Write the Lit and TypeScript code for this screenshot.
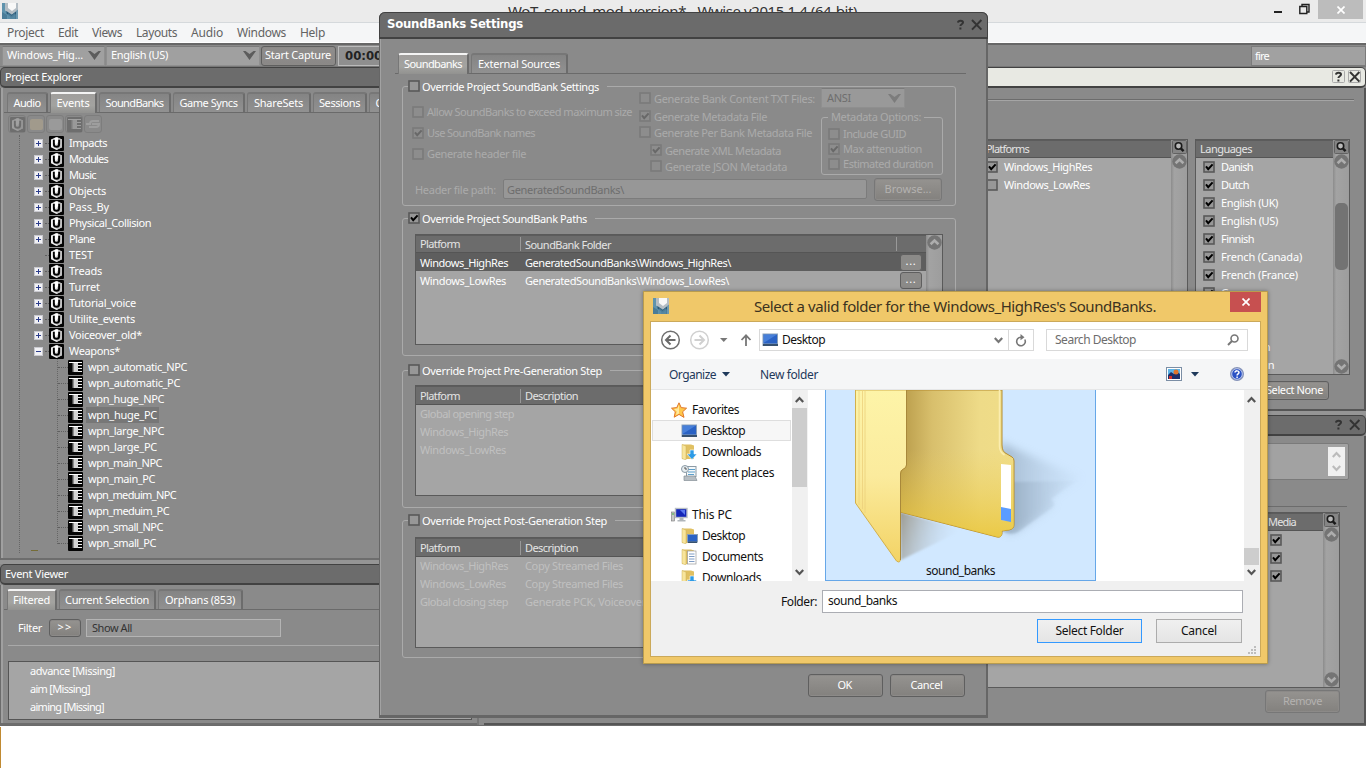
import { LitElement, html, css, svg, nothing } from "lit";
import { customElement } from "lit/decorators.js";

const TAHOMA = '11px "Noto Sans"';
const TAHOMA_BOLD = 'bold 13px "DejaVu Sans Condensed"';
const SEGOE = '12px "Noto Sans"';
const SEGOE_L = '15px "Noto Sans"';
const pen = document.createElement("canvas").getContext("2d")!;

/** Letter spacing that makes a text as wide as its slot. */
const track = (text: string, width: number, font: string) => {
  pen.font = font;
  return ((width - pen.measureText(text).width) / text.length).toFixed(3);
};
const tx = (text: string, width = 0, font = TAHOMA, cls = "") =>
  html`<span class="tx ${cls}" style=${width ? `letter-spacing:${track(text, width, font)}px` : nothing}>${text}</span>`;
const sg = (text: string, width = 0) => tx(text, width, SEGOE);

const logo = html`<svg class="logo" width="16" height="16" viewBox="0 0 16 16">
  <rect width="16" height="16" fill="#4a7c98" /><path d="M0 0h4v8l4 3v5H5V12L0 9z" fill="#5f93ad" /><path d="M3 0H16V7L10 11.500 3 7.500z" fill="#b4bdc4" />
  <path d="M6 0h8v5l-4 3-4-3z" fill="#f8f8f8" /><path d="M4.500 8l5 4.200L14.500 8v2.500l-5 4-5-4z" fill="#2c5a78" /><path d="M6 10l3.500 2.800L13 10v6H6z" fill="#5a8ca6" opacity=".7" /><path d="M14 8l2-1.500v9.500h-2z" fill="#6c98b0" /></svg>`;
const eventU = html`<svg width="15" height="15" viewBox="0 0 15 15"><rect width="15" height="15" rx="1" fill="#050505" />
  <path d="M7.500 1L13 3.600v7.600L7.500 14 2 11.200v-7.600z" fill="#efefef" /><path d="M7.500 1L13 3.600v7.600L7.500 14z" fill="#c2c2c2" />
  <path d="M4.900 3.700v4.500a2.600 2.600 0 0 0 5.200 0V3.700" fill="none" stroke="#000" stroke-width="2" /><path d="M5.900 1.800h3.200v4.200L7.500 8.500 5.900 7z" fill="#fff" /></svg>`;
const action = html`<svg width="15" height="15" viewBox="0 0 15 15"><rect width="15" height="15" rx="1" fill="#050505" />
  <path d="M1 2.500h13" stroke="#fff" /><path d="M10 5.500h4M10 8.500h4M10 11.500h4" stroke="#eee" /><path d="M4.500 3h5.500v9H4.500z" fill="#8c8c8c" /><path d="M6 3H10V12H6z" fill="#d4d4d4" /></svg>`;
const lens = html`<svg class="lens" width="15" height="14" viewBox="0 0 15 14"><rect x=".5" y=".5" width="14" height="13" rx="1" fill="#858585" stroke="#626262" />
  <circle cx="6.500" cy="6" r="3.200" fill="#b9b9b9" stroke="#1a1a1a" stroke-width="1.600" /><path d="M9 8.600l2.600 2.600" stroke="#1a1a1a" stroke-width="2.400" /></svg>`;
const knob = (down = false) => html`<svg class="knob" width="15" height="15" viewBox="0 0 15 15"><circle cx="7.500" cy="7.500" r="7.200" fill="#747474" />
  <path d=${down ? "M3.600 5.800L7.500 9.400l3.900-3.600" : "M3.600 9.200L7.500 5.600l3.900 3.600"} fill="none" stroke="#adadad" stroke-width="2.600" /></svg>`;
const chk = (on: boolean, off = false) => html`<svg class="chk ${off ? "off" : ""}" width="12" height="12" viewBox="0 0 12 12">
  <rect x="1" y="1" width="10" height="10" fill=${off ? "#8d8d8d" : "#979797"} stroke=${off ? "#7a7a7a" : "#595959"} stroke-width="1.600" />
  ${on ? svg`<path d="M3 5.400L5.200 8.200 9.600 3.400" fill="none" stroke=${off ? "#686868" : "#000"} stroke-width="2" />` : nothing}</svg>`;
const tri = (c = "#5c5c5c") => html`<svg width="13" height="9" viewBox="0 0 13 9"><path d="M0 0h2.500l4 3 4-3H13L6.500 9z" fill=${c} /></svg>`;
const helpX = (box = "none") => html`<svg class="hx" width="30" height="14" viewBox="0 0 30 14"><g fill="none" stroke=${box}><rect x=".5" y=".5" width="12" height="12" rx="1" /><rect x="16.500" y=".5" width="12" height="12" rx="1" /></g>
  <path d="M4 4.600c.2-2.400 5-2.300 5 0 0 1.800-2.600 1.500-2.600 3.400M6.400 9.400v2" fill="none" stroke="#333" stroke-width="2" /><path d="M18 2l9.400 9.600M27.400 2L18 11.600" stroke="#333" stroke-width="2" /></svg>`;
const caret = (up: boolean, c = "#555") => html`<svg width="9" height="7" viewBox="0 0 9 7"><path d=${up ? "M.8 6L4.500 2 8.200 6" : "M.8 1L4.500 5 8.200 1"} fill="none" stroke=${c} stroke-width="2.200" /></svg>`;
const desk = html`<svg width="17" height="16" viewBox="0 0 17 16"><rect x=".5" y="1.500" width="15.500" height="12.500" fill="#8aa0b8" /><rect x="1.500" y="2.500" width="13.500" height="9" fill="#2a62c4" /><path d="M1.500 2.500H15L1.500 11z" fill="#5b93e8" opacity=".6" /><path d="M1 12h15v2H1z" fill="#37516f" /></svg>`;
const fold = (extra: unknown) => html`<svg width="17" height="16" viewBox="0 0 17 16"><path d="M1 .5h9l3 1V15H1z" fill="#e0c062" /><path d="M1 .5l4 1.600V16l-4-1.400z" fill="#f8e59c" stroke="#cdb05a" stroke-width=".5" />${extra}</svg>`;
const down = fold(svg`<path d="M9 6h4v4h3l-5 5.600L6 10h3z" fill="#2d9be6" stroke="#fff" stroke-width=".6" />`);
const folDesk = fold(svg`<rect x="6.500" y="6.500" width="10" height="7.500" fill="#2a62c4" stroke="#8aa0b8" /><path d="M7 13.500h9v1.500H7z" fill="#37516f" />`);
const docs = fold(svg`<rect x="6.500" y="2" width="8.500" height="13" fill="#fff" stroke="#999" stroke-width=".7" /><path d="M8 5h5.500M8 7.500h5.500M8 10h5.500M8 12.500h5.500" stroke="#7f9cc4" />`);
const recent = html`<svg width="17" height="16" viewBox="0 0 17 16"><rect x="5.500" y="1.500" width="9.500" height="10" fill="#f4f8fa" stroke="#8b9aa5" /><path d="M7 4.500h7M7 7h7M7 9.500h6" stroke="#5a9fcc" /><path d="M3 11h11l2 4.500H3z" fill="#b7bec3" stroke="#858f96" stroke-width=".7" /><circle cx="4" cy="4" r="3.500" fill="#e6edf0" stroke="#8b9aa5" /><path d="M4 2v2h2" fill="none" stroke="#555" /></svg>`;
const star = html`<svg width="17" height="16" viewBox="0 0 17 16"><path d="M8 .8l2.200 4.800 5.400.6-4 3.600 1.400 5.600L8 12.400 3.200 15.200l1.100-5.400L.5 6.200l5.300-.6z" fill="#ffc84a" stroke="#e0762a" /><path d="M8 2.500v9L5 13l.8-3.600L3 7l3.600-.6z" fill="#ffe9a0" /></svg>`;
const pc = html`<svg width="17" height="16" viewBox="0 0 17 16"><rect x=".5" y="5" width="3" height="9" fill="#c8c8c8" stroke="#777" stroke-width=".6" /><path d="M1 7h2" stroke="#3cb43c" /><rect x="4.500" y="1.500" width="11.500" height="9" fill="#1527b8" stroke="#b9bfc6" stroke-width="1.400" /><path d="M9 3h5v5z" fill="#5a78f0" /><path d="M8.500 11h4v2h2v1.500h-8V13h2z" fill="#b0b6bb" /></svg>`;

const FOLDERS: [string, number][] = [["Impacts", 38], ["Modules", 39], ["Music", 27], ["Objects", 37], ["Pass_By", 40], ["Physical_Collision", 82], ["Plane", 26], ["TEST", 24], ["Treads", 33], ["Turret", 31], ["Tutorial_voice", 67], ["Utilite_events", 66], ["Voiceover_old*", 73], ["Weapons*", 51]];
const EVENTS: [string, number][] = [["wpn_automatic_NPC", 99], ["wpn_automatic_PC", 92], ["wpn_huge_NPC", 76], ["wpn_huge_PC", 69], ["wpn_large_NPC", 76], ["wpn_large_PC", 69], ["wpn_main_NPC", 74], ["wpn_main_PC", 67], ["wpn_meduim_NPC", 88], ["wpn_meduim_PC", 81], ["wpn_small_NPC", 75], ["wpn_small_PC", 68]];
const LANGS: [string, number][] = [["Danish", 32], ["Dutch", 28], ["English (UK)", 57], ["English (US)", 57], ["Finnish", 33], ["French (Canada)", 81], ["French (France)", 77], ["German", 38], ["Greek", 29], ["Hebrew", 37], ["Hungarian", 49], ["Indonesian", 53]];

@customElement("app-root")
export class AppRoot extends LitElement {
  static styles = css`
    :host { display: block; position: relative; width: 1366px; height: 768px; overflow: hidden; background: #fff; font: 11px "Noto Sans", sans-serif; color: #fff; }
    * { box-sizing: border-box; }
    svg { display: block; flex: none; }
    .tx { white-space: pre; display: inline-block; }
    .row, .tabs, .tab, .btn, .field, .head { display: flex; align-items: center; flex: none; }
    .col { display: flex; flex-direction: column; }
    .grow { flex: 1; min-width: 0; }
    .tab .tx, .head .tx, .node .tx, .plat .tx, .lang .tx, .combo .tx, .btn .tx, .g3 .tr .tx, .g4 .tr .tx { margin-bottom: 2px; }
    .app { height: 726px; background: #8a8a8a; border-bottom: 1px solid #6c6c6c; }
    .caption { height: 23px; flex: none; background: #ebebeb; border-bottom: 1px solid #d5d9dc; display: flex; padding-left: 2px; color: #333; }
    .caption .logo { margin-top: 3px; }
    .caption .name { width: 1180px; padding-left: 490px; font: 15px/22px "Noto Sans"; }
    .wmin { width: 8px; height: 2px; background: #222; margin: 11px 17px 0 auto; }
    .wclose { width: 45px; height: 19px; background: #bcbcbc; margin: 0 3px 0 8px; display: flex; align-items: center; justify-content: center; }
    .menu { height: 20px; flex: none; background: #f5f6f7; color: #636363; font: 12px/20px "Noto Sans"; border-bottom: 1px solid #fff; display: grid; grid-template-columns: 51px 34px 44px 55px 46px 63px 40px; padding-left: 7px; }
    .tools { height: 24px; border-top: 2px solid #676767; padding-left: 2px; gap: 1px; border-bottom: 1px solid #777; flex: none; }
    .combo { height: 20px; background: #a0a0a0; border: 1px solid #8f8f8f; border-top-color: #7b7b7b; display: flex; align-items: center; justify-content: space-between; padding: 0 3px 0 5px; }
    .combo.a { width: 103px; padding-left: 4px; } .combo.b { width: 154px; padding-left: 4px; }
    .btn { justify-content: center; border: 1px solid #5f5f5f; border-radius: 3px; background: linear-gradient(#959390, #83817e); box-shadow: inset 0 0 0 1px #8c8a88; }
    .btn.dis { color: #b4b2b0; border-color: #777; }
    .cap { width: 75px; height: 20px; background: linear-gradient(#8f8d8c, #8a8887); padding: 0 1px 1px 0; }
    .clock { border: 1px solid #bbb; background: #8f8f8f; color: #222; height: 20px; width: 200px; font: bold 13px/17px "DejaVu Sans Condensed"; padding-left: 6px; margin-left: 1px; }
    .find { margin-left: auto; width: 115px; height: 20px; background: #a1a1a1; border: 1px solid #7b7b7b; padding-left: 3px; line-height: 17px; }
    .cols { display: flex; flex: 1; min-height: 0; }
    .left { width: 479px; flex: none; border-right: 2px solid #777; }
    .right { flex: 1; margin-left: 5px; }
    .head { height: 21px; border: 1px solid #424242; border-bottom-width: 2px; border-radius: 5px; background: #6c6c6c; padding: 0 3px 0 4px; justify-content: space-between; }
    .head.hot { background: #e8e9e3; }
    .body { border-left: 1px solid #6b6b6b; box-shadow: inset 2px 0 #a0a0a0; border-bottom: 2px solid #6d6d6d; }
    .rbody { border-right: 2px solid #555; border-bottom: 2px solid #555; }
    .explorer { height: 472px; } .gap { height: 4px; background: #959595; flex: none; }
    .tabs { align-items: flex-end; border-bottom: 1px solid #6a6a6a; gap: 2px; height: 25px; margin: 0 0 0 3px; padding-left: 3px; }
    .tab { justify-content: center; height: 20px; border: 1px solid #777; border-width: 2px 2px 0 1px; border-right-color: #6c6c6c; border-radius: 3px 3px 0 0; background: linear-gradient(#848484, #919191); }
    .tab.on { height: 21px; margin-bottom: -1px; border-top: 2px solid #f4f4f4; background: linear-gradient(#a09e9c, #a3a3a0 60%, #929290); }
    .icons { display: flex; gap: 1px; padding: 2px 0 0 7px; height: 22px; flex: none; }
    .ib { width: 18px; height: 18px; border: 1px solid #7d7d7d; border-radius: 3px; display: grid; place-items: center; }
    .ib svg { opacity: .2; }
    .ib i { width: 13px; height: 11px; border-radius: 2px; background: #a19a8c; } .ib i.g { background: #9a9a9a; }
    .tree { height: 418px; overflow: hidden; margin-left: 18px; border-left: 1px dotted #666; }
    .node { height: 16px; display: flex; align-items: center; margin-left: 14px; }
    .pm { width: 9px; height: 9px; background: #f1f1f4; border: 1px solid #c9c9cf; display: grid; place-items: center; margin-right: 2px; flex: none; }
    .pm.leaf { visibility: hidden; }
    .dots { width: 4px; border-top: 1px dotted #5f5f5f; }
    .node .tx { margin-left: 5px; }
    .kids { margin-left: 37px; border-left: 1px dotted #666; height: 185px; }
    .kid { height: 16px; display: flex; align-items: center; }
    .kid .dots { width: 10px; }
    .kid .nm { margin-left: 3px; padding: 0 2px; height: 16px; line-height: 16px; } .kid .nm.on { background: #777; }
    .stub { width: 7px; height: 1px; background: #756c36; margin: 6px 0 0 11px; }
    .filter { height: 36px; margin: 0 0 0 7px; padding-left: 10px; border-bottom: 1px solid #a9a9a9; }
    .filter .btn { width: 32px; height: 18px; margin: 0 5px 0 7px; }
    .fbox { width: 195px; height: 18px; border: 1px solid #b4b4b4; background: #969696; color: #333; padding-left: 5px; line-height: 15px; }
    .list { border: 1px solid #555; background: #a5a5a5; margin: 15px 5px 0 7px; height: 59px; }
    .list div { height: 18px; padding-left: 21px; line-height: 17px; }
    .t { border: 1px solid #5a5a5a; background: #a5a5a5; display: flex; flex: none; overflow: hidden; }
    .th { height: 18px; background: #6c6c6c; border-bottom: 1px solid #555; border-top: 1px solid #5c5c5c; display: flex; align-items: center; color: #e4e4e4; }
    .tr { height: 18px; display: flex; align-items: center; }
    .lang .tr { padding-left: 7px; gap: 6px; }
    .sb { width: 16px; background: linear-gradient(90deg, #8c8c8c, #a3a3a3 20%, #9d9d9d); display: flex; flex-direction: column; align-items: center; flex: none; }
    .thumb { width: 13px; height: 67px; border-radius: 5px; background: #737373; margin-top: 34px; }
    .sb .end { margin-top: auto; }
    .rtop { height: 323px; } .rt { padding: 11px 10px 0 0; height: 51px; flex: none; }
    .rule { height: 2px; border-top: 1px solid #6c6c6c; border-bottom: 1px solid #a5a5a5; }
    .tables { display: flex; justify-content: flex-end; gap: 7px; padding-right: 14px; flex: none; }
    .plat { width: 205px; } .plat .th { padding-left: 2px; } .plat .tr { padding-left: 2px; gap: 6px; }
    .lang { width: 155px; } .lang .th { padding-left: 4px; }
    .plat, .lang { height: 236px; }
    .none { width: 75px; height: 19px; align-self: flex-end; margin: 6px 35px 0 0; padding-left: 6px; }
    .memo { align-self: flex-end; width: 480px; height: 37px; background: #a2a2a2; border: 1px solid #7a7a7a; border-radius: 2px; margin: 7px 15px 0 0; padding: 3px 3px; display: flex; justify-content: flex-end; flex: none; }
    .spin { width: 17px; height: 29px; background: #f0f0f0; display: flex; flex-direction: column; justify-content: space-around; align-items: center; }
    .rule2 { height: 1px; background: #6c6c6c; margin: 26px 17px 5px 0; flex: none; }
    .media { height: 176px; width: 700px; align-self: flex-end; margin-right: 24px; }
    .media .col.grow { align-items: stretch; } .media .th { justify-content: flex-end; padding-right: 27px; }
    .media .tx { margin-bottom: 2px; }
    .media .tr { justify-content: flex-end; padding-right: 41px; }
    .remove { align-self: flex-end; width: 75px; height: 23px; margin: 2px 24px 0 0; }
    .edge { position: absolute; left: 0; top: 727px; width: 1px; height: 41px; background: #c08a32; }

    .dlg { position: absolute; left: 379px; top: 12px; width: 609px; height: 706px; background: #8a8a8a; border: 1px solid #666; border-width: 0 2px 3px 1px; border-radius: 6px 6px 0 0; box-shadow: inset 1px 0 #a2a2a2; display: flex; flex-direction: column; }
    .dt { height: 27px; margin: 0 -2px 0 -1px; border: 1px solid #424242; border-bottom-width: 2px; background: #6b6b6b; border-radius: 6px 6px 0 0; display: flex; justify-content: space-between; align-items: center; padding: 0 3px 2px 7px; font: bold 13px/22px "DejaVu Sans Condensed"; flex: none; }
    .dt .hx { margin-top: 2px; }
    .dlg > .tabs { height: 35px; margin: 0 20px 0 15px; padding-left: 3px; }
    .grp { border: 1px solid #aaa; border-radius: 3px; width: 554px; margin-left: 22px; height: 138px; flex: none; }
    .lg { height: 12px; width: fit-content; margin: -7px 0 0 5px; display: flex; align-items: center; gap: 2px; background: #8a8a8a; padding-right: 8px; }
    .lg .tx { margin-top: 1px; }
    .g1 { margin-top: 12px; height: 120px; } .g2 { margin-top: 12px; } .g3 { margin-top: 14px; } .g4 { margin-top: 12px; }
    .g1 { color: #ababab; } .g1 > .lg { color: #fff; }
    .opts { display: flex; height: 85px; padding-left: 9px; }
    .c1 { width: 227px; padding-top: 9px; } .c1 .o { height: 21px; }
    .c2 { width: 182px; margin-top: -2px; } .c2 .o { height: 16px; }
    .o { display: flex; align-items: center; gap: 3px; flex: none; } .m3 { margin-top: 2px; } .in { padding-left: 11px; } .m2 { margin-top: 2px; }
    .c3 { width: 122px; margin-top: -4px; }
    .c3 .combo { width: 84px; color: #6e6e6e; background: #999; }
    .meta { border: 1px solid #aaa; border-radius: 3px; height: 58px; margin-top: 9px; padding-left: 6px; }
    .meta .lg2 { height: 12px; line-height: 12px; margin: -7px 0 0 0; padding: 0 3px; background: #8a8a8a; width: fit-content; }
    .meta .o { height: 15px; } .meta .o.f { margin-top: 3px; }
    .path { height: 24px; padding-left: 12px; }
    .path .pi { margin-left: 7px; width: 364px; height: 20px; background: #979797; border: 1px solid #7c7c7c; color: #6e6e6e; padding-left: 3px; line-height: 19px; border-radius: 2px; }
    .path .btn { width: 68px; height: 23px; margin-left: 7px; }
    .grp .t { width: 528px; height: 111px; margin: 10px 0 0 12px; }
    .g3 .t { margin-top: 9px; } .g4 .t { margin-top: 11px; }
    .grp .th { height: 19px; } .g2 .th { height: 18px; }
    .th .a, .tr .a { width: 105px; padding-left: 4px; flex: none; } .th .a { border-right: 1px solid #999; height: 14px; line-height: 14px; }
    .th .b, .tr .b { padding-left: 4px; flex: 1; } .th .z { width: 30px; border-left: 1px solid #999; height: 14px; }
    .tr.sel { background: #5e5e5e; } .tr .btn { width: 22px; height: 17px; margin-right: 4px; background: #8b8a88; line-height: 12px; }
    .dim { color: #c0c0c0; }
    .okrow { display: flex; gap: 7px; justify-content: flex-end; margin: 16px 21px 0 0; } .okrow .btn { width: 75px; height: 23px; padding-right: 2px; }

    .fd { position: absolute; left: 643px; top: 291px; width: 625px; height: 373px; background: #f0c869; border: 1px solid #b99c4e; padding: 0 6px; box-shadow: 0 0 4px rgba(0, 0, 0, .35); display: flex; flex-direction: column; font: 12px "Noto Sans", sans-serif; color: #111; }
    .ft { height: 29px; display: flex; padding-left: 3px; flex: none; } .ft .logo { margin-top: 6px; } .ft .name { font: 15px/28px "Noto Sans"; padding-left: 85px; width: 561px; color: #3b3220; }
    .fx { width: 31px; height: 20px; background: #c75050; display: grid; place-items: center; }
    .fb { height: 336px; border: 1px solid #cba95a; background: #f0f0f0; display: flex; flex-direction: column; overflow: hidden; flex: none; }
    .nav { height: 37px; background: #fff; padding: 0 0 1px 9px; display: flex; align-items: center; flex: none; }
    .addr { width: 275px; height: 22px; border: 1px solid #d9d9d9; display: flex; align-items: center; padding-left: 2px; margin-left: 7px; }
    .addr .tx, .srch .tx { margin-bottom: 1px; }
    .addr .tx { margin-left: 3px; } .addr .dd { margin-left: auto; padding-right: 5px; } .addr .rf { border-left: 1px solid #d9d9d9; height: 20px; width: 25px; display: grid; place-items: center; }
    .srch { width: 202px; height: 22px; border: 1px solid #d9d9d9; margin-left: 12px; color: #6d6d6d; display: flex; align-items: center; justify-content: space-between; padding: 0 8px 0 8px; }
    .bar { height: 31px; flex: none; background: #f5f6f7; border-bottom: 1px solid #e6e7e8; color: #1e395b; display: flex; align-items: center; padding-left: 18px; }
    .bar svg { margin-left: 6px; } .bar .grow { padding-left: 30px; } .bar .vd { margin-left: 9px; } .bar .hp { margin: 0 16px 0 31px; }
    .mid { height: 191px; flex: none; display: flex; background: #fff; overflow: hidden; }
    .side { width: 141px; padding-top: 9px; flex: none; }
    .si { height: 21px; display: flex; align-items: center; gap: 4px; padding-left: 20px; flex: none; } .si.s { margin-left: 1px; width: 139px; border: 1px solid transparent; padding-left: 28px; } .si.on { background: #f7f7f7; border-color: #dedede; }
    .si.g { margin-top: 21px; }
    .ws { width: 15px; background: #f0f0f0; display: flex; flex-direction: column; align-items: center; flex: none; padding: 6px 0 5px; justify-content: space-between; }
    .ws.w { width: 16px; padding-right: 1px; }
    .ws i { width: 15px; background: #cdcdcd; } .ws .one { height: 79px; margin-bottom: 77px; } .ws .two { height: 17px; margin-top: 140px; }
    .tile { width: 271px; height: 191px; margin-left: 17px; background: #d1e8ff; border: 1px solid #66a7e8; border-top: 0; flex: none; margin-right: 148px; display: grid; }
    .tile svg, .tile .cp { grid-area: 1 / 1; } .tile .cp { align-self: end; justify-self: center; line-height: 19px; }
    .split { width: 1px; background: #f2f2f2; }
    .frow { display: flex; align-items: center; height: 23px; margin: 9px 0 0 130px; flex: none; }
    .fin { width: 421px; height: 23px; border: 1px solid #abadb3; background: #fff; margin-left: 5px; padding-left: 5px; line-height: 20px; }
    .brow { display: flex; gap: 14px; padding-left: 386px; margin-top: 6px; }
    .wb { width: 86px; height: 24px; border: 1px solid #acacac; background: linear-gradient(#f0f0f0, #e5e5e5); display: grid; place-items: center; line-height: 18px; } .wb.d { width: 105px; border-color: #3399ff; }
    .grip { margin: 3px 3px 0 auto; }
  `;

  private opt(text: string, w: number, on = false, cls = "") {
    return html`<div class="o ${cls}">${chk(on, true)}${tx(text, w)}</div>`;
  }
  private legend(text: string, w: number, on = false) {
    return html`<div class="lg">${chk(on)}${tx(text, w)}</div>`;
  }
  private tab(text: string, w: number, box: number, on = false) {
    return html`<div class="tab ${on ? "on" : ""}" style="width:${box}px">${tx(text, w)}</div>`;
  }

  private leftPane() {
    return html`<div class="left col">
      <div class="head">${tx("Project Explorer", 77)}</div>
      <div class="body explorer col">
        <div class="tabs">${this.tab("Audio", 27, 41)}${this.tab("Events", 33, 47, true)}${this.tab("SoundBanks", 58, 72)}${this.tab("Game Syncs", 58, 72)}${this.tab("ShareSets", 49, 64)}${this.tab("Sessions", 41, 54)}${this.tab("Queries", 38, 52)}</div>
        <div class="icons"><div class="ib">${eventU}</div><div class="ib"><i></i></div><div class="ib"><i class="g"></i></div><div class="ib">${action}</div>
          <div class="ib"><svg width="14" height="12" viewBox="0 0 14 12"><path d="M0 6h4a3 3 0 0 1 3-3h6M6 6h7a3 3 0 0 1-3 3H3" fill="none" stroke="#eee" stroke-width="2" /></svg></div></div>
        <div class="tree">
          ${FOLDERS.map(([n, w]) => html`<div class="node"><div class="pm ${n === "TEST" ? "leaf" : ""}"><svg width="7" height="7" viewBox="0 0 7 7"><path d=${n === "Weapons*" ? "M1 3.500h5" : "M1 3.500h5M3.500 1v5"} stroke="#2b3c8c" /></svg></div><div class="dots"></div>${eventU}${tx(n, w)}</div>`)}
          <div class="kids">${EVENTS.map(([n, w]) => html`<div class="kid"><div class="dots"></div>${action}<div class="nm ${n === "wpn_huge_PC" ? "on" : ""}">${tx(n, w)}</div></div>`)}</div>
          <div class="stub"></div>
        </div>
      </div>
      <div class="gap"></div>
      <div class="head">${tx("Event Viewer", 63)}</div>
      <div class="body col grow">
        <div class="tabs">${this.tab("Filtered", 37, 50, true)}${this.tab("Current Selection", 84, 97)}${this.tab("Orphans (853)", 70, 85)}</div>
        <div class="filter row">${tx("Filter", 24)}<div class="btn">${tx(">>", 15)}</div><div class="fbox">${tx("Show All", 40)}</div></div>
        <div class="list"><div>${tx("advance [Missing]", 85)}</div><div>${tx("aim [Missing]", 60)}</div><div>${tx("aiming [Missing]", 74)}</div></div>
      </div>
    </div>`;
  }

  private rightPane() {
    return html`<div class="right col">
      <div class="head hot"><span></span>${helpX("#aaa")}</div>
      <div class="rbody rtop col">
        <div class="rt"><div class="rule"></div></div>
        <div class="tables">
          <div class="t plat"><div class="col grow"><div class="th">${tx("Platforms", 43)}</div>
            <div class="tr">${chk(true)}${tx("Windows_HighRes", 88)}</div><div class="tr">${chk(false)}${tx("Windows_LowRes", 86)}</div></div>
            <div class="sb">${lens}${knob()}</div></div>
          <div class="t lang"><div class="col grow"><div class="th">${tx("Languages", 52)}</div>
            ${LANGS.map(([n, w]) => html`<div class="tr">${chk(true)}${tx(n, w)}</div>`)}</div>
            <div class="sb">${lens}${knob()}<div class="thumb"></div><div class="end">${knob(true)}</div></div></div>
        </div>
        <div class="btn none">${tx("Select None", 57)}</div>
      </div>
      <div class="gap"></div>
      <div class="head"><span></span>${helpX()}</div>
      <div class="rbody col grow">
        <div class="memo"><div class="spin">${caret(true, "#bbb")}${caret(false, "#bbb")}</div></div>
        <div class="rule2"></div>
        <div class="t media"><div class="col grow"><div class="th">${tx("Media", 28)}</div>${[0, 1, 2].map(() => html`<div class="tr">${chk(true)}</div>`)}</div>
          <div class="sb">${lens}${knob()}<div class="end">${knob(true)}</div></div></div>
        <div class="btn remove dis">${tx("Remove", 39)}</div>
      </div>
    </div>`;
  }

  private settings() {
    return html`<div class="dlg">
      <div class="dt">${tx("SoundBanks Settings", 136, TAHOMA_BOLD)}${helpX()}</div>
      <div class="tabs">${this.tab("Soundbanks", 58, 71, true)}${this.tab("External Sources", 82, 97)}</div>
      <div class="grp g1">${this.legend("Override Project SoundBank Settings", 177)}
        <div class="opts">
          <div class="c1">${this.opt("Allow SoundBanks to exceed maximum size", 205)}${this.opt("Use SoundBank names", 108, true)}${this.opt("Generate header file", 99)}</div>
          <div class="c2">${this.opt("Generate Bank Content TXT Files:", 161)}${this.opt("Generate Metadata File", 113, true, "m3")}${this.opt("Generate Per Bank Metadata File", 158)}${this.opt("Generate XML Metadata", 116, true, "in m2")}${this.opt("Generate JSON Metadata", 122, false, "in")}</div>
          <div class="c3"><div class="combo">${tx("ANSI", 24)}${tri("#7c7c7c")}</div>
            <div class="meta"><div class="lg2">${tx("Metadata Options:", 90)}</div>${this.opt("Include GUID", 63, false, "f")}${this.opt("Max attenuation", 79, true)}${this.opt("Estimated duration", 90)}</div></div>
        </div>
        <div class="path row">${tx("Header file path:", 81)}<div class="pi">${tx("GeneratedSoundBanks\\", 117)}</div><div class="btn dis">${tx("Browse...", 47)}</div></div>
      </div>
      <div class="grp g2">${this.legend("Override Project SoundBank Paths", 165, true)}
        <div class="t"><div class="col grow">
          <div class="th"><div class="a">${tx("Platform", 40)}</div><div class="b">${tx("SoundBank Folder", 86)}</div><div class="z"></div></div>
          <div class="tr sel"><div class="a">${tx("Windows_HighRes", 88)}</div><div class="b">${tx("GeneratedSoundBanks\\Windows_HighRes\\", 206)}</div><div class="btn">${tx("...", 11)}</div></div>
          <div class="tr"><div class="a">${tx("Windows_LowRes", 86)}</div><div class="b">${tx("GeneratedSoundBanks\\Windows_LowRes\\", 204)}</div><div class="btn">${tx("...", 11)}</div></div>
        </div><div class="sb">${knob()}</div></div></div>
      <div class="grp g3">${this.legend("Override Project Pre-Generation Step", 180)}
        <div class="t"><div class="col grow dim">
          <div class="th"><div class="a">${tx("Platform", 40)}</div><div class="b">${tx("Description", 53)}</div></div>
          <div class="tr"><div class="a">${tx("Global opening step", 94)}</div></div><div class="tr"><div class="a">${tx("Windows_HighRes", 88)}</div></div><div class="tr"><div class="a">${tx("Windows_LowRes", 86)}</div></div>
        </div></div></div>
      <div class="grp g4">${this.legend("Override Project Post-Generation Step", 185)}
        <div class="t"><div class="col grow dim">
          <div class="th"><div class="a">${tx("Platform", 40)}</div><div class="b">${tx("Description", 53)}</div></div>
          <div class="tr"><div class="a">${tx("Windows_HighRes", 88)}</div><div class="b">${tx("Copy Streamed Files", 98)}</div></div>
          <div class="tr"><div class="a">${tx("Windows_LowRes", 86)}</div><div class="b">${tx("Copy Streamed Files", 98)}</div></div>
          <div class="tr"><div class="a">${tx("Global closing step", 88)}</div><div class="b">${tx("Generate PCK, Voiceover", 121)}</div></div>
        </div></div></div>
      <div class="okrow"><div class="btn">${tx("OK", 14)}</div><div class="btn">${tx("Cancel", 32)}</div></div>
    </div>`;
  }

  private bigFolder() {
    return html`<svg width="269" height="190" viewBox="0 0 269 190">
      <defs>
        <linearGradient id="fr" x1="0" y1="0" x2="0" y2="1"><stop offset="0" stop-color="#fdf4a8" /><stop offset=".5" stop-color="#fbeb9d" /><stop offset="1" stop-color="#f3d365" /></linearGradient>
        <linearGradient id="bk" x1="0" y1="0" x2="1" y2="0"><stop offset="0" stop-color="#b79a48" /><stop offset=".28" stop-color="#d8bf6c" /><stop offset=".7" stop-color="#eedb88" /><stop offset="1" stop-color="#f0dd88" /></linearGradient>
        <linearGradient id="bt" x1="0" y1="0" x2="0" y2="1"><stop offset=".4" stop-color="#ecd060" stop-opacity="0" /><stop offset="1" stop-color="#eac63a" stop-opacity=".85" /></linearGradient>
        <linearGradient id="sh" x1="0" y1="0" x2="1" y2="0"><stop offset="0" stop-color="#8398ac" /><stop offset="1" stop-color="#b9cfe6" stop-opacity=".2" /></linearGradient>
        <linearGradient id="sh2" x1="0" y1="0" x2="1" y2=".2"><stop offset="0" stop-color="#9c9a90" /><stop offset="1" stop-color="#c8ddf3" stop-opacity="0" /></linearGradient>
        <filter id="bl" x="-20%" y="-20%" width="140%" height="140%"><feGaussianBlur stdDeviation="4" /></filter>
        <filter id="b1"><feGaussianBlur stdDeviation="1" /></filter>
      </defs>
      <path d="M174 52L256 88 225 108 228 116 190 142 180 143z" fill="url(#sh)" filter="url(#bl)" opacity=".6" />
      <path d="M184 92L250 91 225 109q5 5 2 8L192 142q-8 4-16-1z" fill="url(#sh)" filter="url(#b1)" opacity=".55" />
      <path d="M74 122L137 140 75 170z" fill="url(#sh2)" filter="url(#b1)" />
      <path d="M80 0H176V55q0 7 5 9l5 3q2 1 2 4v64q0 4-5 5l-7 1v3q-1 4-5 3L74 122V82z" fill="url(#bk)" stroke="#b58c2e" />
      <path d="M80 0H176V55q0 7 5 9l5 3q2 1 2 4v64q0 4-5 5l-7 1v3q-1 4-5 3L74 122V82z" fill="url(#bt)" />
      <path d="M175 74l10 1v56l-10-1z" fill="#fff" /><path d="M175 117l10 2v13l-10-2z" fill="#5a9cff" />
      <path d="M173.500 0V56q0 6 5 9" fill="none" stroke="#fbedb0" stroke-width="1.500" />
      <path d="M29.500 0H80.500V75q0 3-3 4t-3 5V168q0 6-4 3L29.500 113z" fill="url(#fr)" stroke="#d3b04c" />
      <path d="M33 0V115M36.500 0V119M39 0V123" stroke="#ecd07c" stroke-width=".8" />
      <path d="M80.500 0V75q0 3-3 4t-3 5V170" fill="none" stroke="#a8883a" />
    </svg>`;
  }

  private picker() {
    const item = (ic: unknown, t: string, w: number, c = "s") => html`<div class="si ${c}">${ic}${sg(t, w)}</div>`;
    return html`<div class="fd">
      <div class="ft">${logo}<div class="name">${tx("Select a valid folder for the Windows_HighRes's SoundBanks.", 402, SEGOE_L)}</div>
        <div class="fx"><svg width="8" height="8" viewBox="0 0 8 8"><path d="M.5.5l7 7M7.500.5l-7 7" stroke="#fff" stroke-width="1.700" /></svg></div></div>
      <div class="fb">
        <div class="nav">
          <svg width="92" height="22" viewBox="0 0 92 22"><g fill="none"><circle cx="10.500" cy="11" r="8.800" stroke="#6f6f6f" stroke-width="1.500" /><path d="M15.500 11H6.500M10.500 6.500L6 11l4.500 4.500" stroke="#6a6a6a" stroke-width="2" />
            <circle cx="39.500" cy="11" r="8.800" stroke="#d0d0d0" stroke-width="1.500" /><path d="M34.500 11h9M39.500 6.500L44 11l-4.500 4.500" stroke="#d0d0d0" stroke-width="2" />
            <path d="M86 17V6.500M81.500 11L86 6.300l4.500 4.700" stroke="#777" stroke-width="1.800" /></g><path d="M60 9h7.500l-3.750 4z" fill="#777" /></svg>
          <div class="addr">${desk}${sg("Desktop", 43)}<div class="dd">${caret(false, "#777")}</div><div class="rf"><svg width="12" height="13" viewBox="0 0 12 13"><path d="M9.800 5.500a4.300 4.300 0 1 1-4-2.300h1.500" fill="none" stroke="#777" stroke-width="1.600" /><path d="M5.500 0l4 3.200-4 3z" fill="#777" /></svg></div></div>
          <div class="srch">${sg("Search Desktop", 81)}<svg width="12" height="12" viewBox="0 0 12 12"><circle cx="7.500" cy="4.500" r="3.500" fill="none" stroke="#777" stroke-width="1.600" /><path d="M5 7L1 11" stroke="#777" stroke-width="2" /></svg></div>
        </div>
        <div class="bar">${sg("Organize", 47)}<svg width="8" height="5" viewBox="0 0 8 5"><path d="M0 0h8L4 4.500z" fill="#1e395b" /></svg><span class="grow">${sg("New folder", 58)}</span>
          <svg width="16" height="14" viewBox="0 0 16 14"><rect x=".5" y=".5" width="15" height="13" fill="#fff" stroke="#7b8ea5" /><path d="M2 2h12v10H2z" fill="#5db4e6" /><path d="M2 8l3-3 3 2 2-3 4 3v5H2z" fill="#1c2f6a" /><circle cx="10" cy="5" r="2.500" fill="#e0742a" /><path d="M3 9h3v3H3z" fill="#d0302a" /></svg>
          <svg class="vd" width="8" height="5" viewBox="0 0 8 5"><path d="M0 0h8L4 4.500z" fill="#1e395b" /></svg>
          <svg class="hp" width="14" height="14" viewBox="0 0 14 14"><circle cx="7" cy="7" r="6.300" fill="#2a52c4" stroke="#8794b8" stroke-width="1.400" /><circle cx="7" cy="7" r="5.300" fill="none" stroke="#dfe6fa" stroke-width=".8" /><path d="M5 5.600c0-2.400 4-2.200 4 0 0 1.400-1.900 1.300-1.900 3M7.100 9.400v1.500" fill="none" stroke="#fff" stroke-width="1.500" /></svg></div>
        <div class="mid">
          <div class="side col">${item(star, "Favorites", 47, "")}${item(desk, "Desktop", 43, "s on")}${item(down, "Downloads", 59)}${item(recent, "Recent places", 72)}${item(pc, "This PC", 40, "g")}${item(folDesk, "Desktop", 43)}${item(docs, "Documents", 61)}${item(down, "Downloads", 59)}</div>
          <div class="ws">${caret(true)}<i class="one"></i>${caret(false)}</div>
          <div class="split"></div>
          <div class="tile">${this.bigFolder()}<div class="cp">${sg("sound_banks", 69)}</div></div>
          <div class="ws w">${caret(true)}<i class="two"></i>${caret(false)}</div>
        </div>
        <div class="frow">${sg("Folder:", 36)}<div class="fin">${sg("sound_banks", 69)}</div></div>
        <div class="brow"><div class="wb d">${sg("Select Folder", 68)}</div><div class="wb">${sg("Cancel", 36)}</div></div>
        <svg class="grip" width="9" height="9" viewBox="0 0 9 9"><path d="M6 0h2v2H6zM3 3h2v2H3zM6 3h2v2H6zM0 6h2v2H0zM3 6h2v2H3zM6 6h2v2H6z" fill="#bdbdbd" /></svg>
      </div>
    </div>`;
  }

  render() {
    return html`<div class="app col">
        <div class="caption">${logo}<div class="name">${tx("WoT_sound_mod_version* - Wwise v2015.1.4 (64-bit)", 349, SEGOE_L)}</div>
          <div class="wmin"></div><svg width="11" height="19" viewBox="0 0 11 19"><path d="M.8 6.500h7v7h-7zM3 6V4.500h7V12H8.500" fill="none" stroke="#222" stroke-width="1.400" /></svg>
          <div class="wclose"><svg width="8" height="8" viewBox="0 0 8 8"><path d="M.5.5l7 7M7.500.5l-7 7" stroke="#fff" stroke-width="1.700" /></svg></div></div>
        <div class="menu">${sg("Project", 37)}${sg("Edit", 20)}${sg("Views", 30)}${sg("Layouts", 41)}${sg("Audio", 32)}${sg("Windows", 49)}${sg("Help", 25)}</div>
        <div class="tools row"><div class="combo a">${tx("Windows_Hig...", 76)}${tri()}</div><div class="combo b">${tx("English (US)", 57)}${tri()}</div><div class="btn cap">${tx("Start Capture", 66)}</div><div class="clock">00:00:00</div><div class="find">${tx("fire", 14)}</div></div>
        <div class="cols">${this.leftPane()}${this.rightPane()}</div>
      </div>
      <div class="edge"></div>
      ${this.settings()}${this.picker()}`;
  }
}
